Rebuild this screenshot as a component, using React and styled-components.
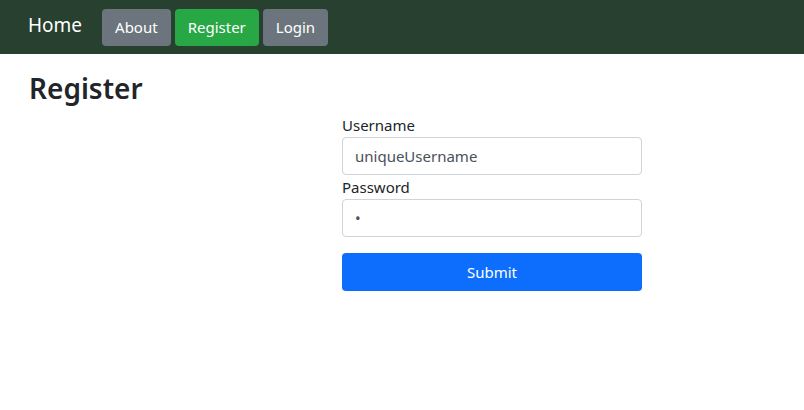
import React from "react";
import styled, { createGlobalStyle } from "styled-components";

const Global = createGlobalStyle`
  html, body { margin: 0; padding: 0; background: #fff; }
  body { font-family: "Noto Sans", "Liberation Sans", sans-serif; color: #212529; font-size: 16px; }
  * { box-sizing: border-box; }
`;

const Nav = styled.nav`
  height: 54px;
  background: #274030;
  display: flex;
  align-items: center;
  padding: 0 8px 0 28px;
  gap: 4px;
`;

const Brand = styled.a`
  color: #fff;
  font-size: 19px;
  margin-right: 16px;
  margin-top: -4px;
  text-decoration: none;
`;

const NavButton = styled.button`
  height: 37px;
  padding: 0 13px;
  border: none;
  border-radius: 4px;
  font-family: inherit;
  font-size: 15px;
  color: #fff;
  background: ${(p) => (p.$active ? "#28a745" : "#6c757d")};
`;

const Main = styled.main`
  padding: 0 29px;
`;

const Title = styled.h2`
  margin: 15px 0 0;
  font-size: 28px;
  font-weight: 600;
  line-height: 38px;
`;

const Form = styled.form`
  width: 300px;
  margin: 6px 0 0 313px;
  display: flex;
  flex-direction: column;
`;

const Label = styled.label`
  font-size: 15px;
  line-height: 24px;
  color: #212529;
`;

const Input = styled.input`
  height: 38px;
  border: 1px solid #ced4da;
  border-radius: 4px;
  padding: 0 12px;
  font-family: inherit;
  font-size: 15px;
  color: #495057;
  margin-bottom: ${(p) => p.$mb || 0}px;
  outline: none;
`;

const Submit = styled.button`
  height: 38px;
  border: none;
  border-radius: 4px;
  background: #0d6efd;
  color: #fff;
  font-family: inherit;
  font-size: 15px;
`;

export default function App() {
  return (
    <>
      <Global />
      <Nav>
        <Brand href="#">Home</Brand>
        <NavButton>About</NavButton>
        <NavButton $active>Register</NavButton>
        <NavButton>Login</NavButton>
      </Nav>
      <Main>
        <Title>Register</Title>
        <Form onSubmit={(e) => e.preventDefault()}>
          <Label>Username</Label>
          <Input defaultValue="uniqueUsername" />
          <Label>Password</Label>
          <Input type="password" defaultValue="a" $mb={16} />
          <Submit>Submit</Submit>
        </Form>
      </Main>
    </>
  );
}
